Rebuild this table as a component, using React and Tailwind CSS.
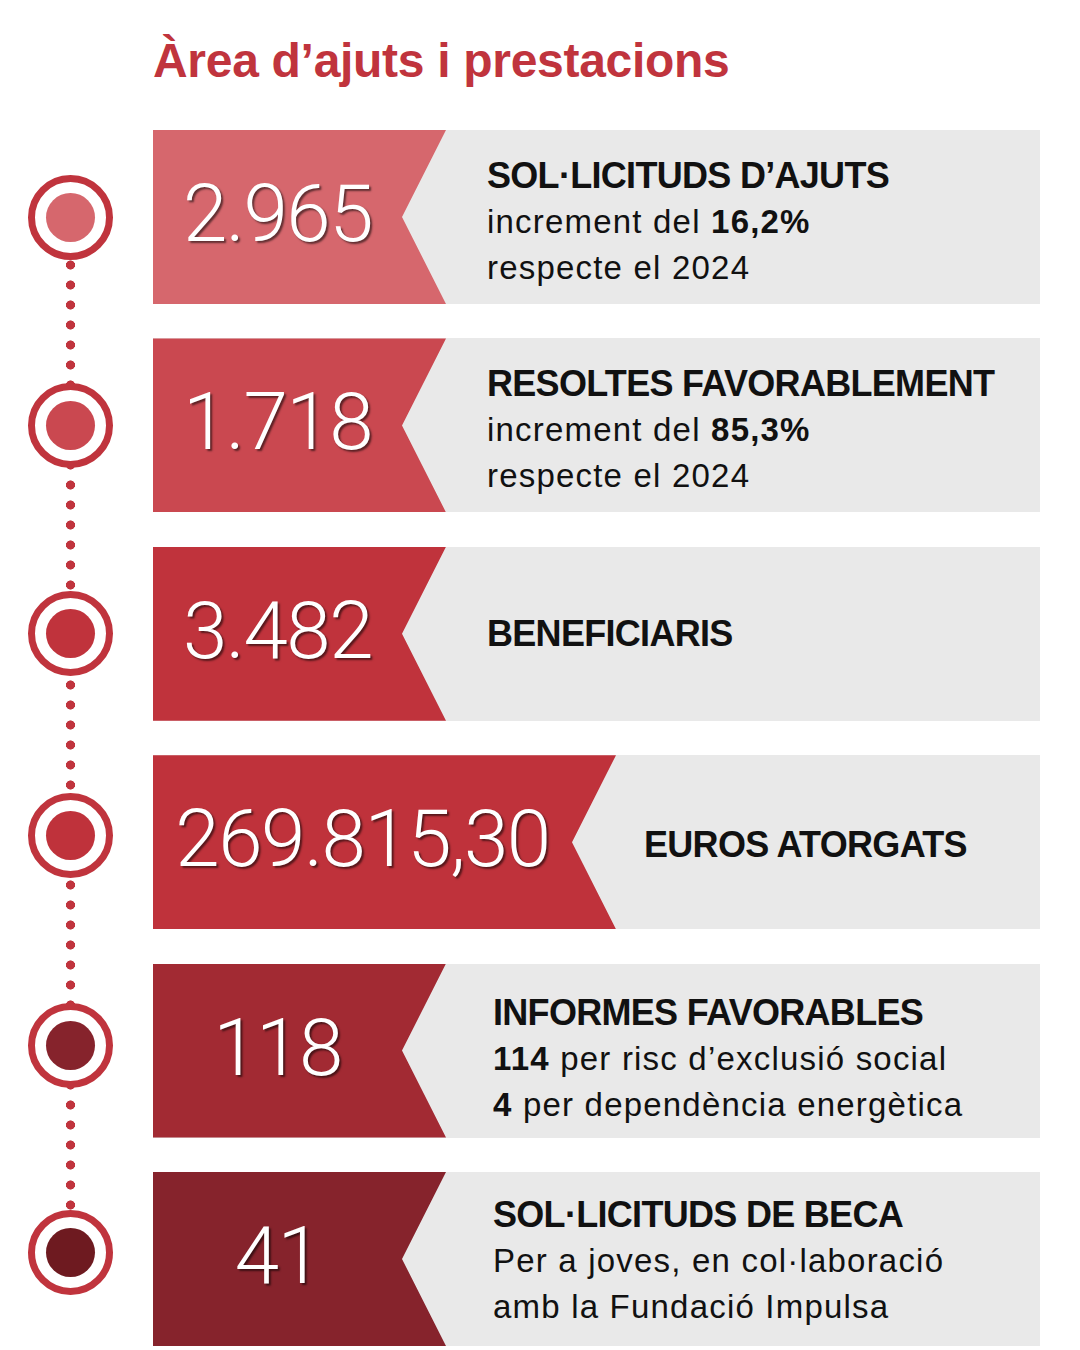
import React from "react";

const rows = [
  {
    num: "2.965",
    band: "bg-[#d6676d]",
    inner: "bg-[#d6676d]",
    redW: "w-[293px]",
    textPad: "pl-[41px] pt-[10px]",
    circle: "",
    title: "SOL·LICITUDS D’AJUTS",
    lines: [
      <>increment del <b>16,2%</b></>,
      <>respecte el 2024</>,
    ],
  },
  {
    num: "1.718",
    band: "bg-[#ca4850]",
    inner: "bg-[#ca4850]",
    redW: "w-[293px]",
    textPad: "pl-[41px] pt-[10px]",
    circle: "",
    title: "RESOLTES FAVORABLEMENT",
    lines: [
      <>increment del <b>85,3%</b></>,
      <>respecte el 2024</>,
    ],
  },
  {
    num: "3.482",
    band: "bg-[#c0333c]",
    inner: "bg-[#c0333c]",
    redW: "w-[293px]",
    textPad: "pl-[41px]",
    circle: "",
    title: "BENEFICIARIS",
    lines: [],
  },
  {
    num: "269.815,30",
    band: "bg-[#bf323b]",
    inner: "bg-[#bf323b]",
    redW: "w-[463px]",
    textPad: "pl-[28px] pt-[6px]",
    circle: "-translate-y-[7px]",
    title: "EUROS ATORGATS",
    lines: [],
  },
  {
    num: "118",
    band: "bg-[#a22a33]",
    inner: "bg-[#86232c]",
    redW: "w-[293px]",
    textPad: "pl-[47px] pt-[16px]",
    circle: "-translate-y-[5px]",
    title: "INFORMES FAVORABLES",
    lines: [
      <><b>114</b> per risc d’exclusió social</>,
      <><b>4</b> per dependència energètica</>,
    ],
  },
  {
    num: "41",
    band: "bg-[#86232c]",
    inner: "bg-[#6e1a20]",
    redW: "w-[293px]",
    textPad: "pl-[47px] pt-[4px]",
    circle: "-translate-y-[6px]",
    title: "SOL·LICITUDS DE BECA",
    lines: [
      <>Per a joves, en col·laboració</>,
      <>amb la Fundació Impulsa</>,
    ],
  },
];

export default function App() {
  return (
    <div className="w-[1080px] h-[1350px] bg-white font-['Liberation_Sans',Arial,sans-serif] overflow-hidden">
      <h1 className="pl-[153px] pt-[37px] text-[48px] leading-none font-bold text-[#c0343d] tracking-[-0.3px]">
        Àrea d’ajuts i prestacions
      </h1>
      <div className="relative mt-[45px] flex flex-col gap-[34.4px]">
        <div className="absolute left-[66px] top-[85px] h-[1040px] w-[9px] [background-image:radial-gradient(circle,#c0343d_4.3px,transparent_4.8px)] [background-size:9px_20px] bg-repeat-y" />
        {rows.map((r, i) => (
          <div key={i} className="relative flex h-[174px] items-center">
            <div className="w-[153px] flex items-center pl-[28px]">
              <div className={`w-[85px] h-[85px] rounded-full border-[7px] border-[#c0343d] bg-white flex items-center justify-center ${r.circle}`}>
                <div className={`w-[49px] h-[49px] rounded-full ${r.inner}`} />
              </div>
            </div>
            <div className="mr-[40px] flex h-full flex-1 items-center bg-[#e9e9e9]">
              <div
                className={`${r.redW} ${r.band} h-full shrink-0 flex items-center justify-center pr-[44px] pb-[6px] [clip-path:polygon(0_0,100%_0,calc(100%-44px)_50%,100%_100%,0_100%)]`}
              >
                <span className="font-['Roboto','Liberation_Sans',sans-serif] font-light text-[80px] leading-none text-white tracking-[-1.5px] [text-shadow:2px_2px_2px_rgba(0,0,0,0.55)]">
                  {r.num}
                </span>
              </div>
              <div className={`${r.textPad} text-[#111] leading-[46px]`}>
                <div className="text-[36px] font-bold tracking-[-0.7px]">{r.title}</div>
                {r.lines.map((l, j) => (
                  <div key={j} className="text-[33px] tracking-[1.2px]">
                    {l}
                  </div>
                ))}
              </div>
            </div>
          </div>
        ))}
      </div>
    </div>
  );
}
